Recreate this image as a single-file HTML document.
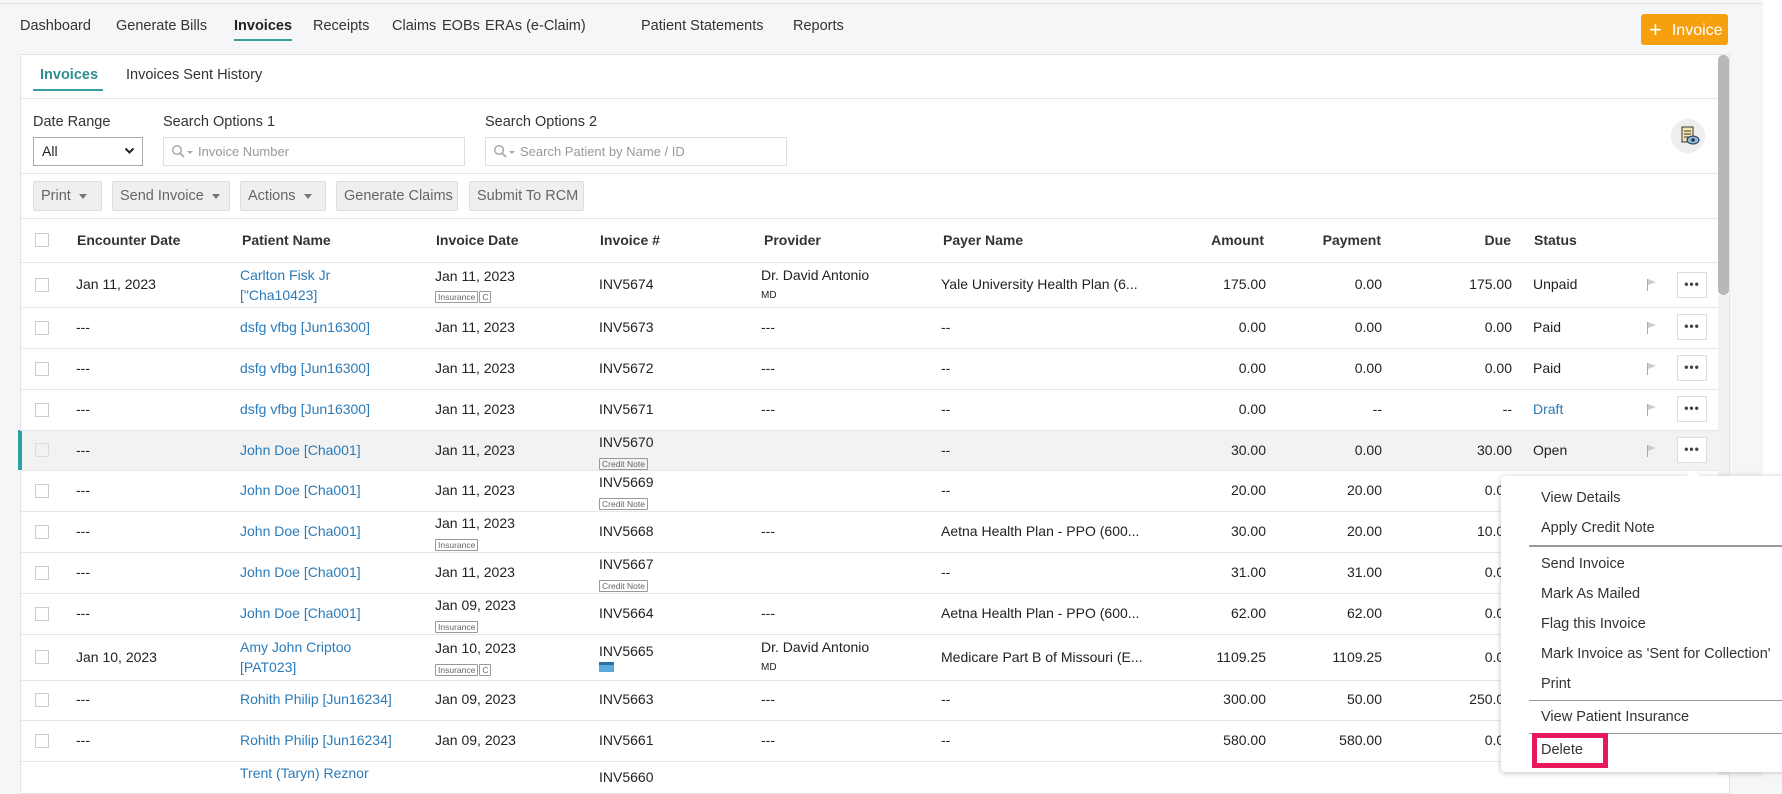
<!DOCTYPE html>
<html><head><meta charset="utf-8"><style>
*{box-sizing:border-box;margin:0;padding:0}
body{width:1782px;height:777px;overflow:hidden;background:#f5f6f8;font-family:"Liberation Sans",sans-serif;color:#222;position:relative;font-size:14px}
.a{position:absolute;white-space:nowrap}
.nav{top:18px;font-size:14.5px;color:#333}
.panel{position:absolute;left:20px;top:54px;width:1710px;height:740px;background:#fff;border:1px solid #e3e3e3}
.hl{position:absolute;left:20px;height:1px;background:#e6e6e6}
.btn{position:absolute;top:181px;height:30px;background:#efefef;border:1px solid #ddd;border-radius:2px;color:#666;font-size:14.5px;line-height:28px;padding-left:7px}
.car{display:inline-block;border-left:4px solid transparent;border-right:4px solid transparent;border-top:5px solid #777;vertical-align:middle;margin-left:8px}
.th{top:232px;font-weight:bold;font-size:14px;color:#333}
.cb{position:absolute;left:35px;width:14px;height:14px;border:1px solid #ccc;background:#fff}
.lk{color:#2b7bb9}
.tag{display:inline-block;border:1px solid #999;color:#666;font-size:8.5px;padding:0 2px;line-height:10px;border-radius:1px}
.r{text-align:right}
.dots{position:absolute;left:1677px;width:30px;height:26px;border:1px solid #ddd;background:#fff;text-align:center;font-weight:bold;font-size:12px;line-height:22px;color:#444;letter-spacing:1px}
.flag{position:absolute;left:1647px;width:1px;height:12px;background:#aaa}
.flag:after{content:"";position:absolute;left:1px;top:0;border-left:8px solid #ccc;border-top:3px solid transparent;border-bottom:3px solid transparent}
.mi{left:1541px;font-size:14.5px;color:#333}
.srch{position:absolute;top:137px;width:302px;height:29px;border:1px solid #e0e0e0;color:#999;font-size:13px;line-height:27px;padding-left:34px}
</style></head><body>
<div class="a" style="left:0;top:3px;width:1782px;height:1px;background:#e0e0e0"></div>
<div class="a" style="left:1763px;top:0;width:19px;height:777px;background:#fff"></div>
<div class="a nav" style="left:20px">Dashboard</div>
<div class="a nav" style="left:116px">Generate Bills</div>
<div class="a nav" style="left:234px;font-weight:bold;color:#222">Invoices</div>
<div class="a" style="left:234px;top:39px;width:58px;height:2px;background:#3a9ea0"></div>
<div class="a nav" style="left:313px">Receipts</div>
<div class="a nav" style="left:392px">Claims</div>
<div class="a nav" style="left:442px">EOBs</div>
<div class="a nav" style="left:485px">ERAs (e-Claim)</div>
<div class="a nav" style="left:641px">Patient Statements</div>
<div class="a nav" style="left:793px">Reports</div>
<div class="a" style="left:1641px;top:14px;width:87px;height:31px;background:#f7a00f;border-radius:3px;color:#fff;font-size:16px;line-height:31px;padding-left:8px"><span style="font-size:22px;vertical-align:-2px;margin-right:10px">+</span>Invoice</div>
<div class="panel"></div>
<div class="a" style="left:1718px;top:55px;width:11px;height:240px;background:#b8b8b8;border-radius:5px"></div>
<div class="a" style="left:1718px;top:295px;width:11px;height:480px;background:#f1f1f1"></div>
<div class="a" style="left:40px;top:67px;font-size:14.5px;font-weight:bold;color:#2f8e90">Invoices</div>
<div class="a" style="left:33px;top:89px;width:70px;height:2px;background:#3a9ea0"></div>
<div class="a" style="left:126px;top:67px;font-size:14.5px;color:#333">Invoices Sent History</div>
<div class="hl" style="top:98px;width:1698px"></div>
<div class="a" style="left:33px;top:114px;font-size:14.5px;color:#333">Date Range</div>
<div class="a" style="left:163px;top:114px;font-size:14.5px;color:#333">Search Options 1</div>
<div class="a" style="left:485px;top:114px;font-size:14.5px;color:#333">Search Options 2</div>
<div class="a" style="left:33px;top:137px;width:110px;height:29px;border:1px solid #aaa;font-size:14px;line-height:27px;padding-left:8px">All</div>
<svg class="a" style="left:124px;top:147px" width="11" height="8" viewBox="0 0 11 8"><path d="M1.5 1.5l4 4 4-4" stroke="#222" stroke-width="2" fill="none"/></svg>
<div class="srch" style="left:163px">Invoice Number</div>
<div class="srch" style="left:485px">Search Patient by Name / ID</div>
<svg class="a" style="left:171px;top:144px" width="24" height="14" viewBox="0 0 24 14"><circle cx="6" cy="6" r="4.3" stroke="#aaa" stroke-width="1.5" fill="none"/><path d="M9 9l4 4" stroke="#aaa" stroke-width="1.8"/><path d="M16 7h6l-3 3z" fill="#aaa"/></svg>
<svg class="a" style="left:493px;top:144px" width="24" height="14" viewBox="0 0 24 14"><circle cx="6" cy="6" r="4.3" stroke="#aaa" stroke-width="1.5" fill="none"/><path d="M9 9l4 4" stroke="#aaa" stroke-width="1.8"/><path d="M16 7h6l-3 3z" fill="#aaa"/></svg>
<div class="a" style="left:1671px;top:119px;width:34px;height:34px;border-radius:50%;background:#eee"></div>
<svg class="a" style="left:1680px;top:126px" width="20" height="20" viewBox="0 0 20 20"><rect x="2" y="1" width="11" height="15" fill="#f7e5b0" stroke="#333" stroke-width="1"/><path d="M4 5h7M4 8h7M4 11h5" stroke="#333"/><ellipse cx="13" cy="14" rx="6" ry="4" fill="#8cb8e0" stroke="#234"/><circle cx="13" cy="14" r="1.8" fill="#234"/></svg>
<div class="hl" style="top:173px;width:1698px"></div>
<div class="btn" style="left:33px;width:69px">Print<span class="car"></span></div>
<div class="btn" style="left:112px;width:118px">Send Invoice<span class="car"></span></div>
<div class="btn" style="left:240px;width:86px">Actions<span class="car"></span></div>
<div class="btn" style="left:336px;width:122px">Generate Claims</div>
<div class="btn" style="left:469px;width:115px">Submit To RCM</div>
<div class="hl" style="top:218px;width:1698px"></div>
<div class="cb" style="top:233px"></div>
<div class="a th" style="left:77px">Encounter Date</div>
<div class="a th" style="left:242px">Patient Name</div>
<div class="a th" style="left:436px">Invoice Date</div>
<div class="a th" style="left:600px">Invoice #</div>
<div class="a th" style="left:764px">Provider</div>
<div class="a th" style="left:943px">Payer Name</div>
<div class="a th r" style="left:1164px;width:100px">Amount</div>
<div class="a th r" style="left:1281px;width:100px">Payment</div>
<div class="a th r" style="left:1411px;width:100px">Due</div>
<div class="a th" style="left:1534px">Status</div>
<div class="hl" style="top:262px;width:1698px"></div>

<div class="a" style="left:21px;top:430px;width:1697px;height:40px;background:#f2f2f2"></div>
<div class="a" style="left:18px;top:430px;width:4px;height:40px;background:#2aa2a4"></div>

<div class="cb" style="top:278px"></div>
<div class="a" style="left:76px;top:276px">Jan 11, 2023</div>
<div class="a lk" style="left:240px;top:265px;line-height:20px">Carlton Fisk Jr<br>["Cha10423]</div>
<div class="a" style="left:435px;top:268px">Jan 11, 2023</div>
<div class="a" style="left:435px;top:287px"><span class="tag">Insurance</span><span class="tag" style="margin-left:1px">C</span></div>
<div class="a" style="left:599px;top:276px">INV5674</div>
<div class="a" style="left:761px;top:267px">Dr. David Antonio</div>
<div class="a" style="left:761px;top:290px;font-size:10px">MD</div>
<div class="a" style="left:941px;top:276px">Yale University Health Plan (6...</div>
<div class="a r" style="left:1166px;top:276px;width:100px">175.00</div>
<div class="a r" style="left:1282px;top:276px;width:100px">0.00</div>
<div class="a r" style="left:1412px;top:276px;width:100px">175.00</div>
<div class="a" style="left:1533px;top:276px">Unpaid</div>
<div class="flag" style="top:279px"></div><div class="dots" style="top:272px">&bull;&bull;&bull;</div>
<div class="hl" style="top:307px;width:1698px"></div>

<div class="cb" style="top:321px"></div><div class="a" style="left:76px;top:319px">---</div><div class="a lk" style="left:240px;top:319px">dsfg vfbg [Jun16300]</div><div class="a" style="left:435px;top:319px">Jan 11, 2023</div><div class="a" style="left:599px;top:319px">INV5673</div><div class="a" style="left:761px;top:319px">---</div><div class="a" style="left:941px;top:319px">--</div><div class="a r" style="left:1166px;top:319px;width:100px">0.00</div><div class="a r" style="left:1282px;top:319px;width:100px">0.00</div><div class="a r" style="left:1412px;top:319px;width:100px">0.00</div><div class="a" style="left:1533px;top:319px">Paid</div><div class="flag" style="top:322px"></div><div class="dots" style="top:314px">&bull;&bull;&bull;</div>
<div class="hl" style="top:348px;width:1698px"></div>

<div class="cb" style="top:362px"></div><div class="a" style="left:76px;top:360px">---</div><div class="a lk" style="left:240px;top:360px">dsfg vfbg [Jun16300]</div><div class="a" style="left:435px;top:360px">Jan 11, 2023</div><div class="a" style="left:599px;top:360px">INV5672</div><div class="a" style="left:761px;top:360px">---</div><div class="a" style="left:941px;top:360px">--</div><div class="a r" style="left:1166px;top:360px;width:100px">0.00</div><div class="a r" style="left:1282px;top:360px;width:100px">0.00</div><div class="a r" style="left:1412px;top:360px;width:100px">0.00</div><div class="a" style="left:1533px;top:360px">Paid</div><div class="flag" style="top:363px"></div><div class="dots" style="top:355px">&bull;&bull;&bull;</div>
<div class="hl" style="top:389px;width:1698px"></div>

<div class="cb" style="top:403px"></div><div class="a" style="left:76px;top:401px">---</div><div class="a lk" style="left:240px;top:401px">dsfg vfbg [Jun16300]</div><div class="a" style="left:435px;top:401px">Jan 11, 2023</div><div class="a" style="left:599px;top:401px">INV5671</div><div class="a" style="left:761px;top:401px">---</div><div class="a" style="left:941px;top:401px">--</div><div class="a r" style="left:1166px;top:401px;width:100px">0.00</div><div class="a r" style="left:1282px;top:401px;width:100px">--</div><div class="a r" style="left:1412px;top:401px;width:100px">--</div><div class="a lk" style="left:1533px;top:401px">Draft</div><div class="flag" style="top:404px"></div><div class="dots" style="top:396px">&bull;&bull;&bull;</div>
<div class="hl" style="top:430px;width:1698px"></div>

<div class="cb" style="top:443px;background:#f2f2f2;border-color:#ddd"></div><div class="a" style="left:76px;top:442px">---</div><div class="a lk" style="left:240px;top:442px">John Doe [Cha001]</div><div class="a" style="left:435px;top:442px">Jan 11, 2023</div><div class="a" style="left:599px;top:434px">INV5670</div><div class="a" style="left:599px;top:454px"><span class="tag">Credit Note</span></div><div class="a" style="left:941px;top:442px">--</div><div class="a r" style="left:1166px;top:442px;width:100px">30.00</div><div class="a r" style="left:1282px;top:442px;width:100px">0.00</div><div class="a r" style="left:1412px;top:442px;width:100px">30.00</div><div class="a" style="left:1533px;top:442px">Open</div><div class="flag" style="top:445px"></div><div class="dots" style="top:437px">&bull;&bull;&bull;</div>
<div class="hl" style="top:470px;width:1698px"></div>

<div class="cb" style="top:484px"></div><div class="a" style="left:76px;top:482px">---</div><div class="a lk" style="left:240px;top:482px">John Doe [Cha001]</div><div class="a" style="left:435px;top:482px">Jan 11, 2023</div><div class="a" style="left:599px;top:474px">INV5669</div><div class="a" style="left:599px;top:494px"><span class="tag">Credit Note</span></div><div class="a" style="left:941px;top:482px">--</div><div class="a r" style="left:1166px;top:482px;width:100px">20.00</div><div class="a r" style="left:1282px;top:482px;width:100px">20.00</div><div class="a r" style="left:1412px;top:482px;width:100px">0.00</div>
<div class="hl" style="top:511px;width:1698px"></div>

<div class="cb" style="top:525px"></div><div class="a" style="left:76px;top:523px">---</div><div class="a lk" style="left:240px;top:523px">John Doe [Cha001]</div><div class="a" style="left:435px;top:515px">Jan 11, 2023</div><div class="a" style="left:435px;top:535px"><span class="tag">Insurance</span></div><div class="a" style="left:599px;top:523px">INV5668</div><div class="a" style="left:761px;top:523px">---</div><div class="a" style="left:941px;top:523px">Aetna Health Plan - PPO (600...</div><div class="a r" style="left:1166px;top:523px;width:100px">30.00</div><div class="a r" style="left:1282px;top:523px;width:100px">20.00</div><div class="a r" style="left:1412px;top:523px;width:100px">10.00</div>
<div class="hl" style="top:552px;width:1698px"></div>

<div class="cb" style="top:566px"></div><div class="a" style="left:76px;top:564px">---</div><div class="a lk" style="left:240px;top:564px">John Doe [Cha001]</div><div class="a" style="left:435px;top:564px">Jan 11, 2023</div><div class="a" style="left:599px;top:556px">INV5667</div><div class="a" style="left:599px;top:576px"><span class="tag">Credit Note</span></div><div class="a" style="left:941px;top:564px">--</div><div class="a r" style="left:1166px;top:564px;width:100px">31.00</div><div class="a r" style="left:1282px;top:564px;width:100px">31.00</div><div class="a r" style="left:1412px;top:564px;width:100px">0.00</div>
<div class="hl" style="top:593px;width:1698px"></div>

<div class="cb" style="top:607px"></div><div class="a" style="left:76px;top:605px">---</div><div class="a lk" style="left:240px;top:605px">John Doe [Cha001]</div><div class="a" style="left:435px;top:597px">Jan 09, 2023</div><div class="a" style="left:435px;top:617px"><span class="tag">Insurance</span></div><div class="a" style="left:599px;top:605px">INV5664</div><div class="a" style="left:761px;top:605px">---</div><div class="a" style="left:941px;top:605px">Aetna Health Plan - PPO (600...</div><div class="a r" style="left:1166px;top:605px;width:100px">62.00</div><div class="a r" style="left:1282px;top:605px;width:100px">62.00</div><div class="a r" style="left:1412px;top:605px;width:100px">0.00</div>
<div class="hl" style="top:634px;width:1698px"></div>

<div class="cb" style="top:650px"></div><div class="a" style="left:76px;top:649px">Jan 10, 2023</div><div class="a lk" style="left:240px;top:637px;line-height:20px">Amy John Criptoo<br>[PAT023]</div><div class="a" style="left:435px;top:640px">Jan 10, 2023</div><div class="a" style="left:435px;top:660px"><span class="tag">Insurance</span><span class="tag" style="margin-left:1px">C</span></div><div class="a" style="left:599px;top:643px">INV5665</div><div class="a" style="left:599px;top:662px;width:15px;height:10px;background:#5aa9dc;border-top:3px solid #2e6f9e"></div><div class="a" style="left:761px;top:639px">Dr. David Antonio</div><div class="a" style="left:761px;top:662px;font-size:10px">MD</div><div class="a" style="left:941px;top:649px">Medicare Part B of Missouri (E...</div><div class="a r" style="left:1166px;top:649px;width:100px">1109.25</div><div class="a r" style="left:1282px;top:649px;width:100px">1109.25</div><div class="a r" style="left:1412px;top:649px;width:100px">0.00</div>
<div class="hl" style="top:680px;width:1698px"></div>

<div class="cb" style="top:693px"></div><div class="a" style="left:76px;top:691px">---</div><div class="a lk" style="left:240px;top:691px">Rohith Philip [Jun16234]</div><div class="a" style="left:435px;top:691px">Jan 09, 2023</div><div class="a" style="left:599px;top:691px">INV5663</div><div class="a" style="left:761px;top:691px">---</div><div class="a" style="left:941px;top:691px">--</div><div class="a r" style="left:1166px;top:691px;width:100px">300.00</div><div class="a r" style="left:1282px;top:691px;width:100px">50.00</div><div class="a r" style="left:1412px;top:691px;width:100px">250.00</div>
<div class="hl" style="top:720px;width:1698px"></div>

<div class="cb" style="top:734px"></div><div class="a" style="left:76px;top:732px">---</div><div class="a lk" style="left:240px;top:732px">Rohith Philip [Jun16234]</div><div class="a" style="left:435px;top:732px">Jan 09, 2023</div><div class="a" style="left:599px;top:732px">INV5661</div><div class="a" style="left:761px;top:732px">---</div><div class="a" style="left:941px;top:732px">--</div><div class="a r" style="left:1166px;top:732px;width:100px">580.00</div><div class="a r" style="left:1282px;top:732px;width:100px">580.00</div><div class="a r" style="left:1412px;top:732px;width:100px">0.00</div>
<div class="hl" style="top:761px;width:1698px"></div>
<div class="a lk" style="left:240px;top:765px">Trent (Taryn) Reznor</div>
<div class="a" style="left:599px;top:769px">INV5660</div>

<div class="a" style="left:1501px;top:476px;width:290px;height:296px;background:#fff;border-radius:4px;box-shadow:0 1px 6px rgba(0,0,0,.25)"></div>
<div class="a" style="left:1686px;top:470px;border-left:7px solid transparent;border-right:7px solid transparent;border-bottom:7px solid #fff"></div>
<div class="a mi" style="top:490px">View Details</div>
<div class="a mi" style="top:520px">Apply Credit Note</div>
<div class="a" style="left:1529px;top:545px;width:253px;height:2px;background:#999"></div>
<div class="a mi" style="top:556px">Send Invoice</div>
<div class="a mi" style="top:586px">Mark As Mailed</div>
<div class="a mi" style="top:616px">Flag this Invoice</div>
<div class="a mi" style="top:646px">Mark Invoice as 'Sent for Collection'</div>
<div class="a mi" style="top:676px">Print</div>
<div class="a" style="left:1529px;top:700px;width:253px;height:1px;background:#999"></div>
<div class="a mi" style="top:709px">View Patient Insurance</div>
<div class="a" style="left:1529px;top:733px;width:253px;height:1px;background:#999"></div>
<div class="a mi" style="top:742px">Delete</div>
<div class="a" style="left:1532px;top:733px;width:76px;height:35px;border:5px solid #e8185a"></div>
</body></html>
